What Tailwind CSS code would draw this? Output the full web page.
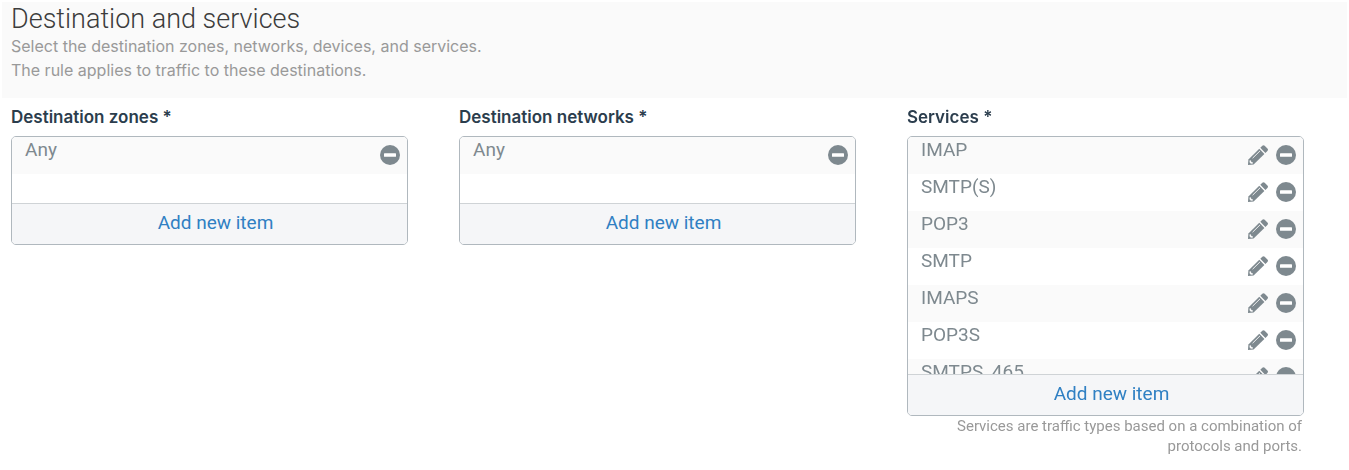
<!DOCTYPE html>
<html lang="en">
<head>
    <meta charset="UTF-8">
    <meta name="viewport" content="width=device-width, initial-scale=1.0">
    <title>Destination and services</title>
    <script src="https://cdn.jsdelivr.net/npm/@tailwindcss/browser@4"></script>
</head>
<body class="bg-white font-['Roboto',sans-serif]">
    <!-- Shared icons -->
    <svg class="hidden" aria-hidden="true">
        <symbol id="icon-remove" viewBox="0 0 20 20">
            <circle cx="10" cy="10" r="10" fill="#7e898f"/>
            <rect x="4" y="8.200" width="12" height="3.600" rx="0.6" fill="#fff"/>
        </symbol>
        <symbol id="icon-edit" viewBox="0 0 20 20">
            <path fill="#7e898f" d="M14.300.8q1.200-1.200 2.400 0l2.700 2.700q1.200 1.200 0 2.400l-2 2-5.100-5.100z"/>
            <path fill="#7e898f" d="M11.300 3.800l5.100 5.100L5.600 19.600 0 20l.4-5.500z"/>
            <path fill="none" stroke="#fafafa" stroke-width="0.900" d="M4.600 13.200l7.400-7.300"/>
            <path fill="#fafafa" d="M1.700 15.200l1.300.4.300 1.300 1.400.4.300 1.200-2.100.2-1.400-1.400z"/>
        </symbol>
    </svg>

    <header class="mt-0.5 mx-0.5 bg-[#fafafa] pl-[9px] pt-0.5 pb-4">
        <h1 class="text-[27px] leading-[30px] font-light text-[#3c3c3c]">Destination and services</h1>
        <p class="font-['Inter',sans-serif] text-base leading-6 text-[#999]">Select the destination zones, networks, devices, and services.<br>The rule applies to traffic to these destinations.</p>
    </header>

    <main class="grid grid-cols-3 items-start gap-[51px] pt-2 pl-[11px] pr-[45px]">
        <section aria-labelledby="zones-label">
            <h2 id="zones-label" class="mb-2 font-['Inter',sans-serif] text-[17px] leading-[22px] font-semibold text-[#2b3d4d]">Destination zones *</h2>
            <div class="overflow-hidden rounded-[5px] border border-[#b0b8be]">
                <ul class="h-[66px] overflow-y-auto [scrollbar-width:none]">
                    <li class="flex h-[37px] justify-between bg-[#fafafa] pl-[13px] pr-[7px] text-[19px] leading-[26px] text-[#7e898f]">
                        <span>Any</span>
                        <button type="button" aria-label="Remove Any" class="size-5 mt-2"><svg class="size-5"><use href="#icon-remove"/></svg></button>
                    </li>
                </ul>
                <button type="button" class="block h-[41px] w-full border-t border-[#cfd3d6] bg-[#f5f6f8] pl-3 pb-0.5 text-[19px] leading-6 text-[#3080c3]">Add new item</button>
            </div>
        </section>

        <section aria-labelledby="networks-label">
            <h2 id="networks-label" class="mb-2 font-['Inter',sans-serif] text-[17px] leading-[22px] font-semibold text-[#2b3d4d]">Destination networks *</h2>
            <div class="overflow-hidden rounded-[5px] border border-[#b0b8be]">
                <ul class="h-[66px] overflow-y-auto [scrollbar-width:none]">
                    <li class="flex h-[37px] justify-between bg-[#fafafa] pl-[13px] pr-[7px] text-[19px] leading-[26px] text-[#7e898f]">
                        <span>Any</span>
                        <button type="button" aria-label="Remove Any" class="size-5 mt-2"><svg class="size-5"><use href="#icon-remove"/></svg></button>
                    </li>
                </ul>
                <button type="button" class="block h-[41px] w-full border-t border-[#cfd3d6] bg-[#f5f6f8] pl-3 pb-0.5 text-[19px] leading-6 text-[#3080c3]">Add new item</button>
            </div>
        </section>

        <section aria-labelledby="services-label">
            <h2 id="services-label" class="mb-2 font-['Inter',sans-serif] text-[17px] leading-[22px] font-semibold text-[#2b3d4d]">Services *</h2>
            <div class="overflow-hidden rounded-[5px] border border-[#b0b8be]">
                <ul id="services" class="h-[237px] overflow-y-auto [scrollbar-width:none]"></ul>
                <button type="button" class="block h-[41px] w-full border-t border-[#cfd3d6] bg-[#f5f6f8] pl-3 pb-0.5 text-[19px] leading-6 text-[#3080c3]">Add new item</button>
            </div>
            <p class="pl-10 pr-0.5 text-right text-[15px] leading-5 text-[#999]">Services are traffic types based on a combination of protocols and ports.</p>
        </section>
    </main>

    <script>
        const services = ['IMAP', 'SMTP(S)', 'POP3', 'SMTP', 'IMAPS', 'POP3S', 'SMTPS_465'];

        // Fill the services list
        document.getElementById('services').innerHTML = services.map(name => `
            <li class="flex h-[37px] bg-white odd:bg-[#fafafa] pl-[13px] pr-[7px] text-[19px] leading-[26px] text-[#7e898f]">
                <span class="flex-1">${name}</span>
                <button type="button" aria-label="Edit ${name}" class="size-5 mt-2 mr-2"><svg class="size-5"><use href="#icon-edit"/></svg></button>
                <button type="button" aria-label="Remove ${name}" class="size-5 mt-2"><svg class="size-5"><use href="#icon-remove"/></svg></button>
            </li>`).join('');
    </script>
</body>
</html>
